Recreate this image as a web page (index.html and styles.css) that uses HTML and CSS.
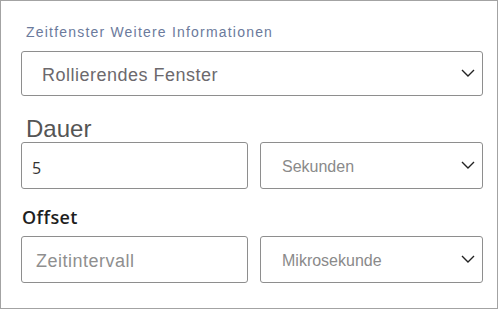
FILE: index.html
```html
<!DOCTYPE html>
<html lang="de">
<head>
<meta charset="utf-8">
<link rel="stylesheet" href="styles.css">
</head>
<body>
<div class="panel">
  <div class="info-label">Zeitfenster Weitere Informationen</div>
  <div class="box select wide">
    <span class="select-text main">Rollierendes Fenster</span>
    <svg class="chev" width="14" height="8" viewBox="0 0 14 8"><polyline points="1,1 7,7 13,1" fill="none" stroke="#222" stroke-width="1.4"/></svg>
  </div>
  <div class="big-label">Dauer</div>
  <div class="row">
    <div class="box input"><span class="value">5</span></div>
    <div class="box select">
      <span class="select-text unit">Sekunden</span>
      <svg class="chev" width="14" height="8" viewBox="0 0 14 8"><polyline points="1,1 7,7 13,1" fill="none" stroke="#222" stroke-width="1.4"/></svg>
    </div>
  </div>
  <div class="bold-label">Offset</div>
  <div class="row">
    <div class="box input"><span class="placeholder">Zeitintervall</span></div>
    <div class="box select">
      <span class="select-text unit">Mikrosekunde</span>
      <svg class="chev" width="14" height="8" viewBox="0 0 14 8"><polyline points="1,1 7,7 13,1" fill="none" stroke="#222" stroke-width="1.4"/></svg>
    </div>
  </div>
</div>
</body>
</html>
```

FILE: styles.css
```css
html, body {
  margin: 0;
  padding: 0;
  background: #ffffff;
}

.panel {
  box-sizing: border-box;
  width: 498px;
  height: 309px;
  border: 1px solid #a3a3a3;
  padding: 23px 14px 0 20px;
  font-family: "Liberation Sans", Arial, sans-serif;
}

.info-label {
  height: 16px;
  line-height: 16px;
  font-size: 14px;
  letter-spacing: 1.2px;
  color: #6b7a9c;
  margin-left: 5px;
}

.box {
  box-sizing: border-box;
  border: 1px solid #8e8e8e;
  border-radius: 3px;
  display: flex;
  align-items: center;
  padding-top: 4px;
}

.wide {
  margin-top: 11px;
  width: 462px;
  height: 45px;
}

.select {
  justify-content: space-between;
  padding-left: 20px;
  padding-right: 7px;
}

.select .chev {
  margin-top: -5px;
}

.select-text.main {
  font-size: 18px;
  letter-spacing: 0.5px;
  color: #6c696d;
}

.select-text.unit {
  font-size: 16px;
  color: #8a8a8a;
  margin-top: -1px;
}

.big-label {
  margin-top: 19px;
  height: 27px;
  line-height: 28px;
  font-size: 24px;
  color: #555555;
  margin-left: 5px;
}

.row {
  display: flex;
  gap: 12px;
}

.row .box {
  height: 47px;
}

.row .input {
  width: 227px;
}

.row .select {
  width: 223px;
  padding-left: 21px;
}

.value {
  font-family: "Open Sans", sans-serif;
  font-size: 16px;
  color: #333333;
  padding-left: 10px;
}

.placeholder {
  font-size: 18px;
  letter-spacing: 0.5px;
  color: #8f8f8f;
  padding-left: 14px;
}

.bold-label {
  margin-top: 16px;
  margin-bottom: 7px;
  height: 24px;
  line-height: 24px;
  font-family: "Open Sans", sans-serif;
  font-weight: 600;
  font-size: 18px;
  letter-spacing: 0.4px;
  color: #1e1e1e;
  margin-left: 1px;
}
```
